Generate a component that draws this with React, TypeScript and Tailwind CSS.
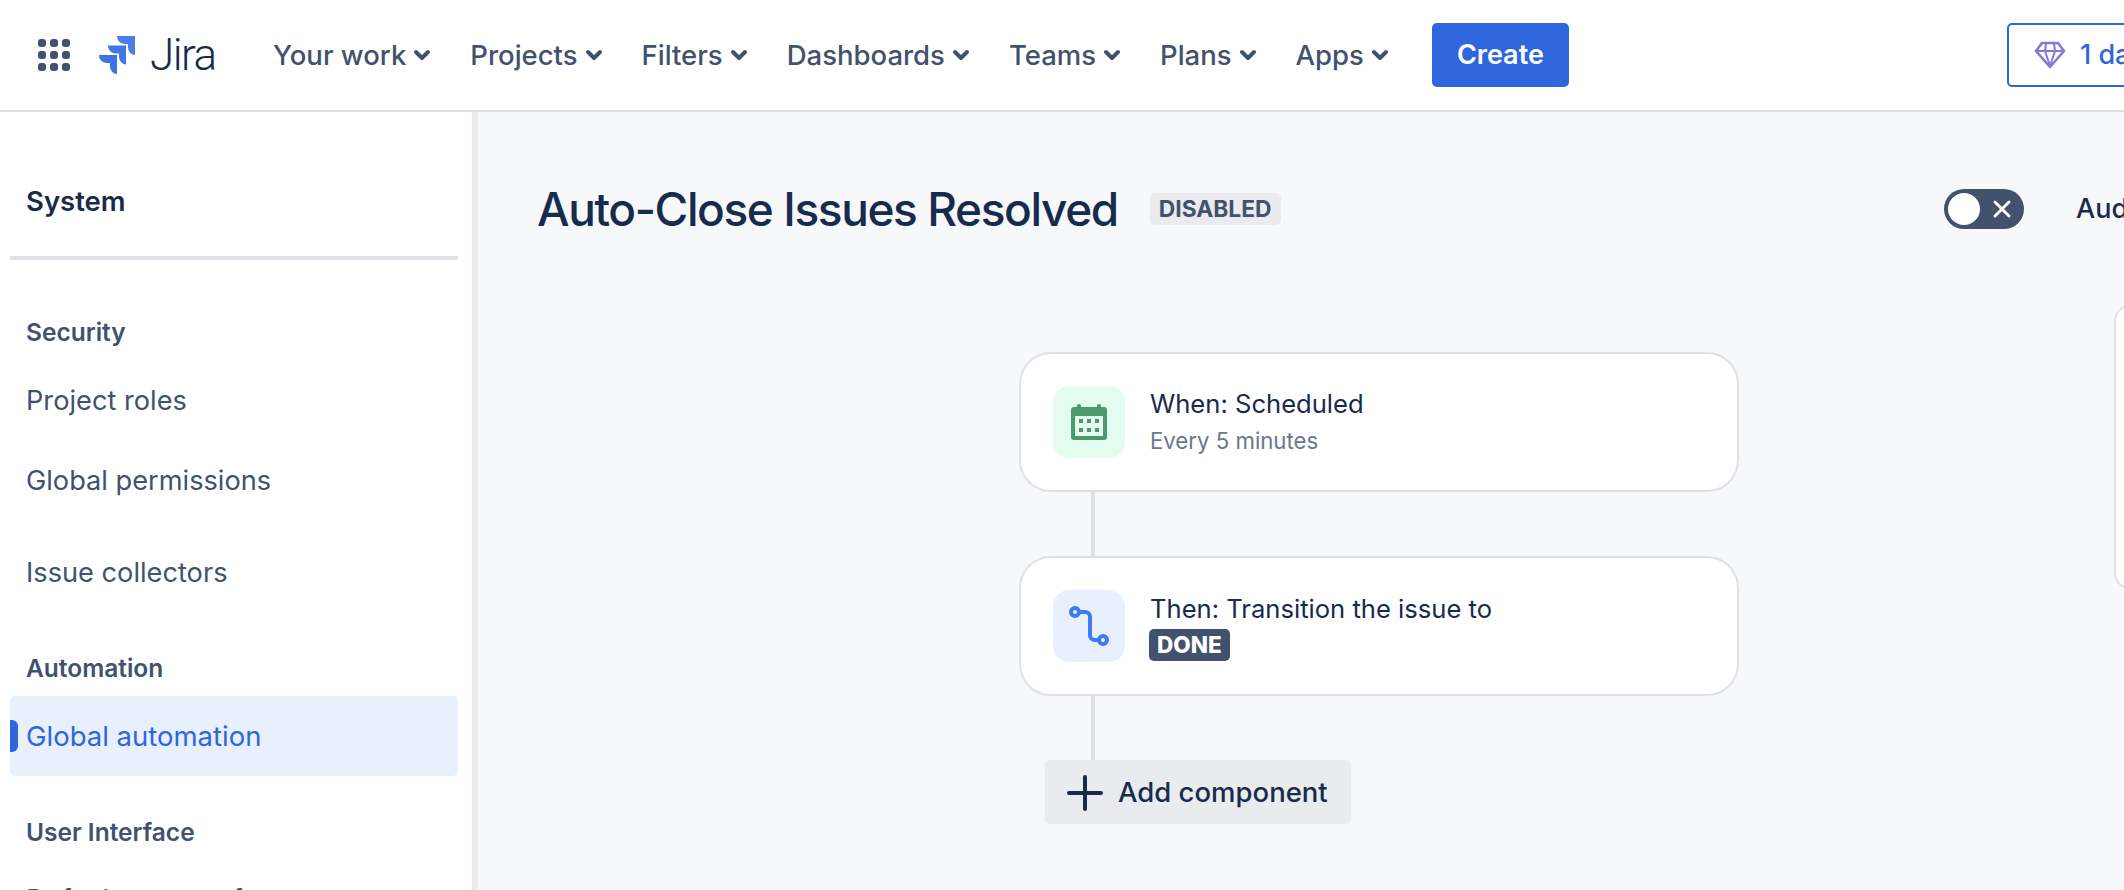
import { ChevronDown, X } from 'lucide-react'
import type { ReactNode } from 'react'

const navItems = ['Your work', 'Projects', 'Filters', 'Dashboards', 'Teams', 'Plans', 'Apps']

function AppGrid() {
  return (
    <div className="grid grid-cols-3 gap-[4px] w-[32px] shrink-0">
      {Array.from({ length: 9 }).map((_, i) => (
        <span key={i} className="w-[8px] h-[8px] rounded-[3px] bg-[#42526e]" />
      ))}
    </div>
  )
}

function JiraMark() {
  return (
    <svg width="38" height="38" viewBox="0 0 38 38" className="shrink-0">
      <path d="M37 0H19c0 4 3 8 8 8h3v3c0 4 3 8 7 8z" fill="#4a7fe8" />
      <path d="M28 9.500H10c0 4 3 8 8 8h3v3c0 4 3 8 7 8z" fill="#3f78e6" />
      <path d="M19 19H1c0 4 3 8 8 8h3v3c0 4 3 8 7 8z" fill="#3a73e4" />
    </svg>
  )
}

function Diamond() {
  return (
    <svg width="32" height="28" viewBox="0 0 32 28" fill="none" stroke="#8777d9" strokeWidth="2.600" strokeLinejoin="round" className="shrink-0">
      <path d="M8 2h16l6 8-14 16L2 10z" />
      <path d="M2 10h28M12 2.500 11 10l5 15M20 2.500l1 7.500-5 15" strokeWidth="2" />
    </svg>
  )
}

function CalendarIcon() {
  return (
    <svg width="36" height="36" viewBox="0 0 36 36">
      <rect x="0" y="3" width="36" height="33" rx="3" fill="#4b9a6d" />
      <rect x="6" y="0" width="4" height="8" rx="2" fill="#4b9a6d" />
      <rect x="26" y="0" width="4" height="8" rx="2" fill="#4b9a6d" />
      <rect x="4" y="12" width="28" height="20" fill="#e3fcef" />
      <rect x="8" y="15" width="4" height="4" fill="#4b9a6d" />
      <rect x="16" y="15" width="4" height="4" fill="#4b9a6d" />
      <rect x="24" y="15" width="4" height="4" fill="#4b9a6d" />
      <rect x="8" y="24" width="4" height="4" fill="#4b9a6d" />
      <rect x="16" y="24" width="4" height="4" fill="#4b9a6d" />
      <rect x="24" y="24" width="4" height="4" fill="#4b9a6d" />
    </svg>
  )
}

function TransitionIcon() {
  return (
    <svg width="40" height="40" viewBox="0 0 40 40" fill="none" stroke="#3f7bf0" strokeWidth="4">
      <circle cx="6" cy="6" r="4" />
      <circle cx="34" cy="34" r="4" />
      <path d="M10 6h6c3 0 5 2 5 5v18c0 3 2 5 5 5h4" />
    </svg>
  )
}

function PlusIcon() {
  return (
    <svg width="36" height="36" viewBox="0 0 36 36" fill="none" stroke="currentColor" strokeWidth="4" strokeLinecap="round" className="shrink-0">
      <path d="M18 2v32M2 18h32" />
    </svg>
  )
}

function SectionTitle({ children, className }: { children: string; className: string }) {
  return <div className={`pl-[16px] text-[24.500px] font-semibold leading-[24px] text-[#42526e] ${className}`}>{children}</div>
}

function SideLink({ children, className }: { children: string; className: string }) {
  return <div className={`pl-[16px] text-[27.200px] leading-[28px] text-[#42526e] whitespace-nowrap ${className}`}>{children}</div>
}

function RuleCard({ icon, tint, textClass, children }: { icon: ReactNode; tint: string; textClass: string; children: ReactNode }) {
  return (
    <div className="w-[720px] h-[140px] flex items-center pl-[32px] gap-[25px] bg-white border-2 border-[#dfe1e6] rounded-[32px]">
      <div className={`w-[72px] h-[72px] rounded-[16px] flex items-center justify-center ${tint}`}>{icon}</div>
      <div className={textClass}>{children}</div>
    </div>
  )
}

function Connector({ className }: { className: string }) {
  return <div className={`ml-[72px] w-[4px] bg-[#dfe1e6] ${className}`} />
}

export default function App() {
  return (
    <div className="w-[2124px] h-[890px] overflow-hidden flex flex-col bg-white font-['Inter',sans-serif] antialiased">
      <header className="h-[112px] shrink-0 flex items-center border-b-2 border-[#dfe1e6] bg-white pl-[38px] whitespace-nowrap">
        <AppGrid />
        <div className="ml-[28px] w-[115px] flex items-center gap-[14px]">
          <JiraMark />
          <span className="font-['Roboto',sans-serif] text-[44px] font-light tracking-[-1.500px] leading-none text-[#172b4d]">Jira</span>
        </div>
        <nav className="ml-[60px] w-[1180px] flex items-center gap-[36px]">
          {navItems.map((item) => (
            <div key={item} className="flex items-center gap-[4px] text-[#42526e]">
              <span className="text-[27.500px] font-medium leading-[32px]">{item}</span>
              <ChevronDown size={24} strokeWidth={4} />
            </div>
          ))}
          <button className="ml-[4px] h-[64px] w-[137px] shrink-0 rounded-[5px] bg-[#2f66dd] text-[27px] font-semibold text-white">Create</button>
        </nav>
        <button className="ml-auto mr-[-120px] h-[64px] w-[237px] pl-[25px] shrink-0 flex items-center gap-[14px] rounded-[5px] border-2 border-[#2f66dd] text-[27px] font-medium text-[#2f66dd]">
          <Diamond />1 day left
        </button>
      </header>

      <div className="flex-1 min-h-0 flex">
        <aside className="w-[478px] shrink-0 border-r-[6px] border-[#ebecf0] bg-white pl-[10px] pr-[14px]">
          <div className="h-[148px] border-b-4 border-[#dfe1e6] rounded-b-[2px] pt-[72px] pl-[16px] text-[27.500px] font-semibold leading-[34px] text-[#172b4d]">System</div>
          <SectionTitle className="mt-[60px]">Security</SectionTitle>
          <SideLink className="mt-[43px]">Project roles</SideLink>
          <SideLink className="mt-[52px]">Global permissions</SideLink>
          <SideLink className="mt-[64px]">Issue collectors</SideLink>
          <SectionTitle className="mt-[69px]">Automation</SectionTitle>
          <div className="relative mt-[16px] h-[80px] flex items-center rounded-[5px] bg-[#e9f0fd] pl-[16px] pt-[2px] text-[27.500px] text-[#2f66dd]">
            <span className="absolute left-0 top-[24px] w-[8px] h-[32px] rounded-r-[6px] bg-[#2f66dd]" />
            Global automation
          </div>
          <SectionTitle className="mt-[44px]">User Interface</SectionTitle>
          <SideLink className="mt-[42px]">Default user preferences</SideLink>
        </aside>

        <main className="flex-1 min-w-0 bg-[#f7f8fa] relative whitespace-nowrap">
          <div className="h-[194px] pl-[60px] flex items-center">
            <div className="w-[1406px] shrink-0 flex items-center">
              <h1 className="-ml-[1px] text-[46px] font-[550] tracking-[-1.400px] leading-[52px] text-[#172b4d]">Auto-Close Issues Resolved</h1>
              <span className="ml-[32px] h-[32px] px-[9px] flex items-center rounded-[5px] bg-[#e9ebef] text-[22.800px] font-bold text-[#42526e]">DISABLED</span>
            </div>
            <div className="w-[80px] h-[40px] shrink-0 rounded-full bg-[#42526e] flex items-center pl-[4px]">
              <span className="w-[32px] h-[32px] rounded-full bg-white shrink-0" />
              <X size={28} strokeWidth={2.500} className="ml-[8px] shrink-0 text-white" />
            </div>
            <span className="ml-[52px] text-[27px] font-medium text-[#172b4d]">Audit log</span>
          </div>
          <div className="pl-[541px] pt-[46px]">
            <RuleCard tint="bg-[#e3fcef]" textClass="pb-[2px]" icon={<CalendarIcon />}>
              <div className="text-[25.600px] leading-[32px] text-[#172b4d]">When: Scheduled</div>
              <div className="mt-[7px] text-[22.200px] leading-[28px] text-[#6b778c]">Every 5 minutes</div>
            </RuleCard>
            <Connector className="h-[64px]" />
            <RuleCard tint="bg-[#e9f0fd]" textClass="pt-[1px]" icon={<TransitionIcon />}>
              <div className="text-[25.600px] leading-[32px] text-[#172b4d]">Then: Transition the issue to</div>
              <div className="mt-[4px] -ml-[1px] w-fit flex items-center h-[32px] px-[8px] rounded-[5px] bg-[#42526e] text-[22.500px] font-extrabold text-white">DONE</div>
            </RuleCard>
            <Connector className="h-[64px]" />
            <button className="ml-[26px] h-[64px] w-[306px] pl-[22px] pt-[1px] flex items-center gap-[15px] rounded-[5px] bg-[#e9ebef] text-[27.500px] font-medium text-[#172b4d]">
              <PlusIcon />Add component
            </button>
          </div>
          {/* panel cut off at the right edge */}
          <div className="absolute left-[1636px] top-[193px] w-[200px] h-[284px] bg-white border-2 border-[#dfe1e6] rounded-[16px]" />
        </main>
      </div>
    </div>
  )
}
